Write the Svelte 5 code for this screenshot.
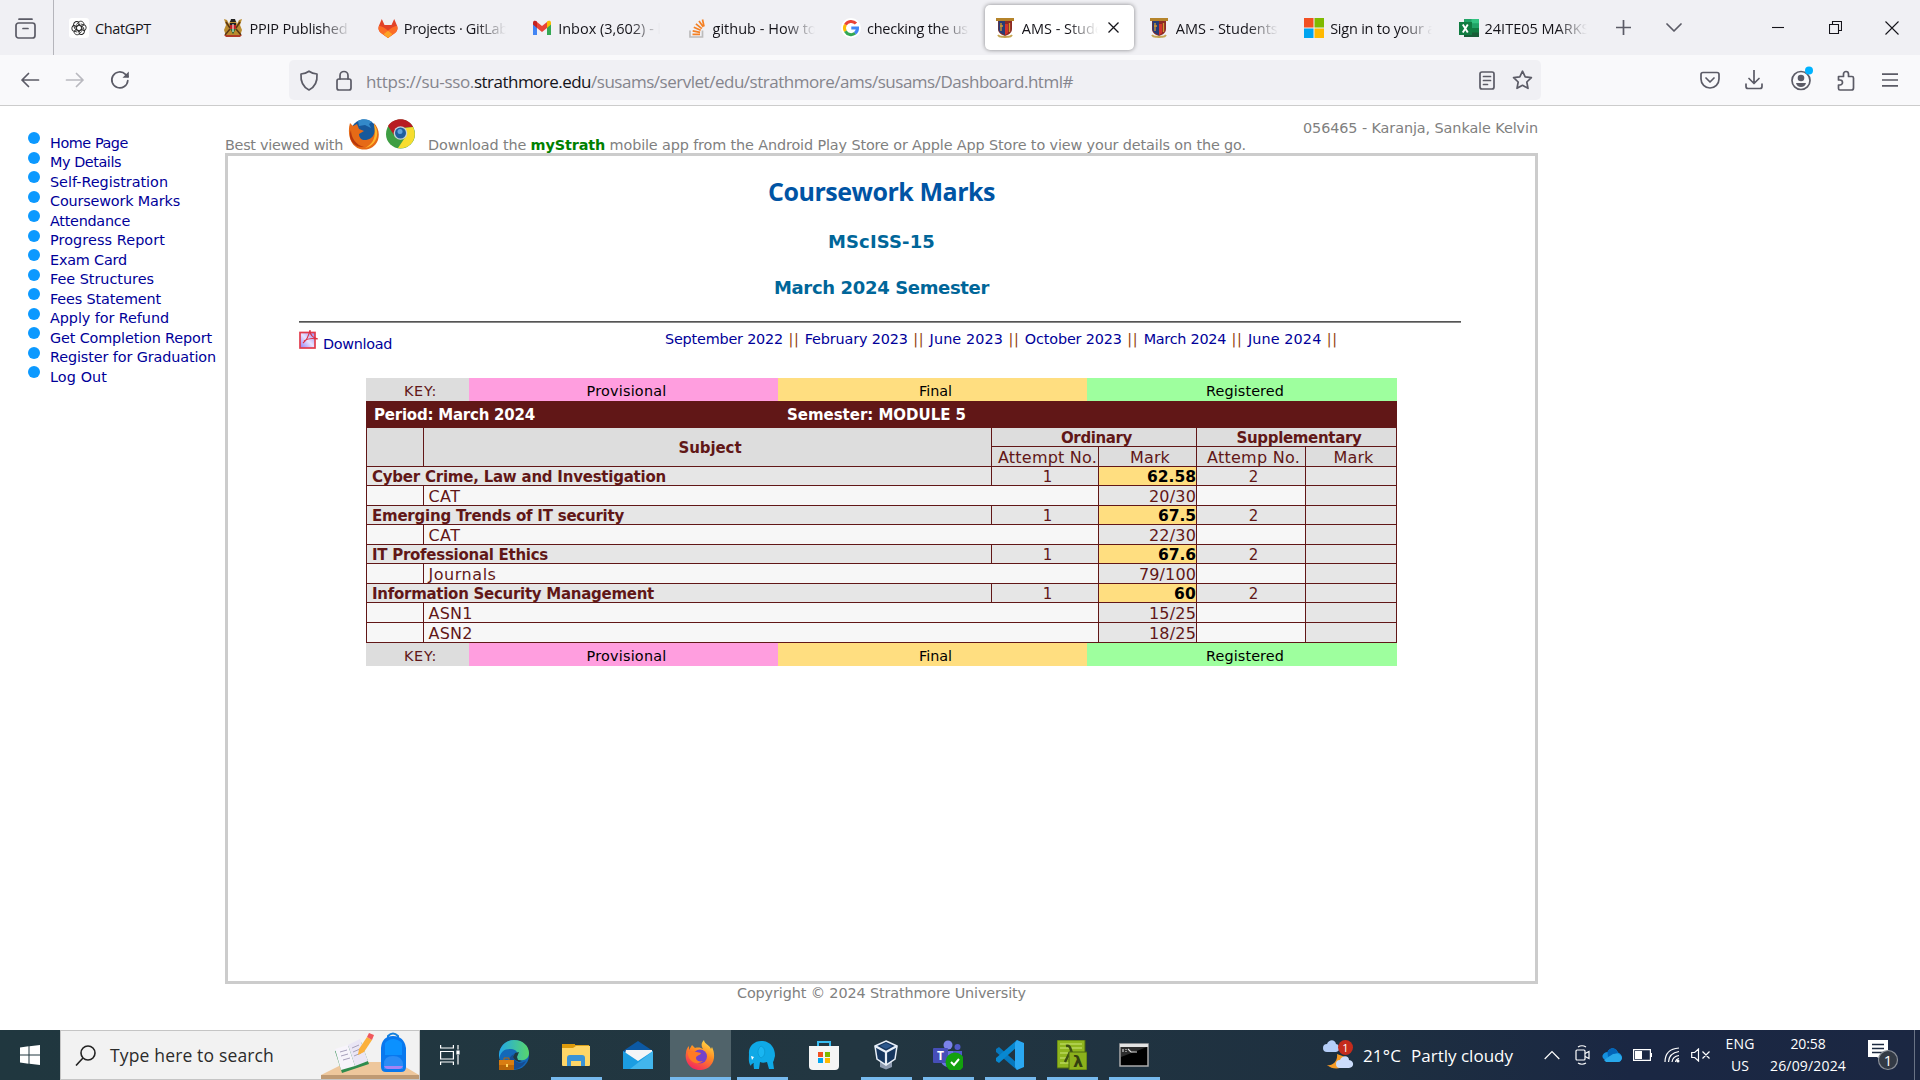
<script>
  const tabs = [
    { icon: 'gpt', title: 'ChatGPT', w: 56 },
    { icon: 'kenya', title: 'PPIP Published D', w: 112 },
    { icon: 'gitlab', title: 'Projects · GitLab', w: 104 },
    { icon: 'gmail', title: 'Inbox (3,602) - k', w: 107 },
    { icon: 'stack', title: 'github - How to', w: 104 },
    { icon: 'google', title: 'checking the use', w: 109 },
    { icon: 'ams', title: 'AMS - Stude', w: 81, active: true },
    { icon: 'ams', title: 'AMS - Students', w: 102 },
    { icon: 'ms', title: 'Sign in to your a', w: 105 },
    { icon: 'excel', title: '24ITE05 MARKS', w: 105 }
  ];
  const menu = [
    ['Home Page', 78], ['My Details', 71], ['Self-Registration', 118], ['Coursework Marks', 130],
    ['Attendance', 80], ['Progress Report', 115], ['Exam Card', 77], ['Fee Structures', 104],
    ['Fees Statement', 111], ['Apply for Refund', 119], ['Get Completion Report', 162],
    ['Register for Graduation', 166], ['Log Out', 57]
  ];
  const semesters = [
    ['September 2022', 118], ['February 2023', 103], ['June 2023', 73.5],
    ['October 2023', 97], ['March 2024', 82.5], ['June 2024', 73.5]
  ];
  const subjects = [
    { name: 'Cyber Crime, Law and Investigation', w: 294, mark: '62.58', mw: 49, parts: [['CAT', '20/30', 32, 47]] },
    { name: 'Emerging Trends of IT security', w: 252, mark: '67.5', mw: 38, parts: [['CAT', '22/30', 32, 47]] },
    { name: 'IT Professional Ethics', w: 176, mark: '67.6', mw: 38, parts: [['Journals', '79/100', 68, 57]] },
    { name: 'Information Security Management', w: 282, mark: '60', mw: 22, parts: [['ASN1', '15/25', 44, 47], ['ASN2', '18/25', 44, 47]] }
  ];
  const apps = [
    { icon: 'edge' }, { icon: 'folder', open: true }, { icon: 'mail' },
    { icon: 'firefox', open: true, current: true }, { icon: 'elephant', open: true }, { icon: 'store' },
    { icon: 'vbox', open: true }, { icon: 'teams', open: true }, { icon: 'code', open: true },
    { icon: 'lambda', open: true }, { icon: 'cmd', open: true }
  ];

  // Tracks the text so that a line takes exactly the given width.
  function fit(node, width) {
    node.style.letterSpacing = '0px';
    const natural = node.getBoundingClientRect().width;
    const count = node.textContent.trim().length;
    node.style.letterSpacing = (width - natural) / count + 'px';
  }
</script>

{#snippet art(name)}
  {#if name === 'gpt'}
    <svg viewBox="0 0 20 20"><rect width="20" height="20" rx="3" fill="#fff" /><g fill="none" stroke="#222" stroke-width=".9">{#each [0, 60, 120, 180, 240, 300] as a}<path transform="rotate({a} 10 10)" d="M10 7.300 13 9V12.600M7.300 6.500 10.400 3.500c2.200-1 4.900.8 4.600 3.400L12 8.800" />{/each}</g></svg>
  {:else if name === 'kenya'}
    <svg viewBox="0 0 20 20"><path d="M1 1l3 1 2 4 1-3h6l1 3 2-4 3-1-2 6 2 5-2 6H3l-2-6 2-5z" fill="#b98b2e" /><path d="M3 4l4 6M17 4l-4 6M2 17l5-6M18 17l-5-6" stroke="#5a3414" stroke-width="1.500" /><path d="M8 1h4l1 3H7z" fill="#222" /><path d="M7 5h6v5l-3 6-3-6z" fill="#bd1f24" /><path d="M7 5h6v2H7z" fill="#222" /><path d="M7.500 11h5L10 16z" fill="#187c3b" /><path d="M10 6v8" stroke="#fff" /><path d="M1 17h18l-2 2H3z" fill="#b03a27" /></svg>
  {:else if name === 'gitlab'}
    <svg viewBox="0 0 20 20"><path d="M3.800 1 1 7.500C-.2 10.500.5 13 3 15l7 5 7-5c2.500-2 3.200-4.500 2-7.500L16.200 1l-2.700 6h-7z" fill="#e24329" /><path d="M1 7.800c3.500.5 6.200 2.500 9 5 2.800-2.500 5.500-4.500 9-5 1 3 .2 5.400-2 7.200L10 20l-7-5C.8 13.200 0 10.800 1 7.800z" fill="#fc6d26" /><path d="M5.500 16.200 10 12.800l4.500 3.400L10 20z" fill="#fca326" /></svg>
  {:else if name === 'gmail'}
    <svg viewBox="0 0 20 20"><path d="M1 5v12h4V8.500z" fill="#4285f4" /><path d="M15 8.500V17h4V5z" fill="#34a853" /><path d="M5 4v6l5 4 5-4V4l-5 4z" fill="#ea4335" /><path d="M1 6.500v-2C1 2.500 3.500 2 5 3.500V10z" fill="#c5221f" /><path d="M19 6.500v-2c0-2-2.500-2.500-4-1V10z" fill="#fbbc04" /></svg>
  {:else if name === 'stack'}
    <svg viewBox="0 0 20 20"><path d="M3 12.500v6.500h12.500v-6.500" fill="none" stroke="#bcbbbb" stroke-width="1.700" /><g stroke="#f48024" stroke-width="1.700"><path d="M5.500 16.300h7.500M5.700 12.800l7.400 1.500M6.800 9.200l6.900 3.100M8.900 5.800l5.900 4.800M12 3l4.300 6M15.500 1.500l1.500 7" /></g></svg>
  {:else if name === 'google'}
    <svg viewBox="0 0 20 20"><circle cx="10" cy="10" r="10" fill="#fff" /><g fill="none" stroke-width="3"><path d="M15 5.600A6.500 6.500 0 0 0 4.400 6.800" stroke="#ea4335" /><path d="M4.400 6.700a6.500 6.500 0 0 0 0 6.600" stroke="#fbbc05" /><path d="M4.400 13.200a6.500 6.500 0 0 0 9.800 2" stroke="#34a853" /><path d="M14 15.300A6.500 6.500 0 0 0 16.500 10H10.300" stroke="#4285f4" /></g></svg>
  {:else if name === 'ams'}
    <svg viewBox="0 0 20 20"><path d="M0 0h18v3H0z" fill="#b5842b" /><path d="M2 3h14v8c0 4-4 6-7 7-3-1-7-3-7-7z" fill="#8c2a25" /><path d="M2.500 3H9v14C5 15.500 2.500 14 2.500 11z" fill="#263c78" /><path d="M9 6h3v9l-3 2z" fill="#d4342c" /><path d="M5 5v8M4 8h3M13.500 5v9" stroke="#d49b30" stroke-width="1.300" /><path d="M2 17c2 3 4 1 7 2 3-1 5 1 7-2" fill="none" stroke="#c6a653" stroke-width="2" /></svg>
  {:else if name === 'ms'}
    <svg viewBox="0 0 20 20"><path d="M0 0h9.500v9.500H0z" fill="#f25022" /><path d="M10.500 0H20v9.500h-9.500z" fill="#7fba00" /><path d="M0 10.500h9.500V20H0z" fill="#00a4ef" /><path d="M10.500 10.500H20V20h-9.500z" fill="#ffb900" /></svg>
  {:else if name === 'excel'}
    <svg viewBox="0 0 20 20"><path d="M5 1h15v18H5z" fill="#21a366" /><path d="M12.500 1H20v4.500h-7.500z" fill="#33c481" /><path d="M12.500 5.500H20V10h-7.500z" fill="#21a366" /><path d="M5 5.500h7.500V10H5z" fill="#107c41" /><path d="M5 10h15v9H5z" fill="#185c37" /><path d="M12.500 10H20v4.500h-7.500z" fill="#107c41" /><rect y="4" width="13" height="13" fill="#107c41" /><path d="M3.800 6.500l5 8M8.800 6.500l-5 8" stroke="#fff" stroke-width="1.900" /></svg>
  {:else if name === 'edge'}
    <svg viewBox="0 0 30 30"><defs><linearGradient id="eg" x1="0" x2="1"><stop offset="0" stop-color="#22a7e8" /><stop offset="1" stop-color="#58d66b" /></linearGradient></defs><circle cx="15" cy="15" r="15" fill="#1368b8" /><path d="M0 14C1 5 8 0 15 0c9 0 15 6 15 13 0 5-4 8-9 7-4 0-4-2-3-4 2-4-2-7-7-7C5 9 1 12 0 20z" fill="url(#eg)" /><path d="M15 14c-2 5 2 9 7 9l5-2c-3 6-9 9-15 8-4-5-3-12 3-15z" fill="#174c91" /><path d="M16 13l4-1-2 5 1 3 4 1-3 1-4-2-2-3z" fill="#203840" /><rect x="0" y="20" width="15" height="10" fill="#b96508" /><path d="M0 20h15v5H0z" fill="#d97d12" /><path d="M5 20v-2h5v2" fill="none" stroke="#b96508" /><path d="M7 24h2v3H7z" fill="#ffd35c" /></svg>
  {:else if name === 'folder'}
    <svg viewBox="0 0 30 30"><path d="M1 4h13v5H1z" fill="#dd9a0b" /><path d="M14 5h14v3H14z" fill="#dba21c" /><path d="M1 8h11l3-2h14v19q0 1-1 1H2q-1 0-1-1z" fill="#ffd667" /><path d="M6 26v-8q0-3 3-3h12q3 0 3 3v8h-4v-5H10v5z" fill="#3b93d6" /></svg>
  {:else if name === 'mail'}
    <svg viewBox="0 0 30 30"><path d="M0 11 15 1l15 10v18H0z" fill="#0c59a4" /><path d="M3 10h26v6l-13 7L2 14z" fill="#f3f5f7" /><path d="M0 11l15 10 15-10v18H0z" fill="#1b9de2" /><path d="M30 11v18H7z" fill="#52c1f2" opacity=".7" /></svg>
  {:else if name === 'firefox'}
    <svg viewBox="0 0 30 30"><defs><linearGradient id="ff" x1=".8" y1="0" x2=".3" y2="1"><stop offset="0" stop-color="#ffe14a" /><stop offset=".45" stop-color="#ff8a22" /><stop offset="1" stop-color="#f32560" /></linearGradient></defs><path d="M19 0c0 4 6 5 7 9l1-2c5 10 1 22-11 23C6 31-1 22 1 13c0-3 1-5 3-7v4l3-5 3 3c4-1 6 0 8 1-2-3-2-6 1-9z" fill="url(#ff)" /><circle cx="15" cy="16.500" r="7" fill="#7542c9" /><path d="M3 12c4-2 9 0 13 1-1 3-5 2-5 5s4 4 7 3c-7 6-16-1-15-9z" fill="#ff7a24" /></svg>
  {:else if name === 'elephant'}
    <svg viewBox="0 0 30 30"><path d="M2 14C1 6 8 0 16 1c8 1 12 7 12 15-1 3-1 5-2 6l1 7h-5l-2-7c-3 1-5 1-7 0l-1 7H7c0-2-1-4 0-6-2 1-3 1-3 3-3-3-2-8-2-12z" fill="#0fa9e6" /><path d="M14 6c5 2 5 10 0 12-4-3-4-9 0-12z" fill="#19b6f2" stroke="#0a95cc" stroke-width=".7" /><path d="M4 16l3 1-2 3z" fill="#fff" /></svg>
  {:else if name === 'store'}
    <svg viewBox="0 0 30 30"><path d="M9 6V2h12v4" fill="none" stroke="#38bdf2" stroke-width="2" /><path d="M0 6h30v20q0 4-4 4H4q-4 0-4-4z" fill="#f5f5f5" /><path d="M9 12h5v5H9z" fill="#f25022" /><path d="M16 12h5v5h-5z" fill="#7fba00" /><path d="M9 18h5v5H9z" fill="#00a4ef" /><path d="M16 18h5v5h-5z" fill="#ffb900" /></svg>
  {:else if name === 'vbox'}
    <svg viewBox="0 0 30 30"><path d="M9 22l6-1 6 1v5l-6 2.500-6-2.500z" fill="#8d9bb0" /><path d="M15 1 26 6 24 19 15 25 6 19 4 6z" fill="#16365e" stroke="#e8eff8" stroke-width="1.500" /><path d="M4 6l11 6 11-6M15 12v13" fill="none" stroke="#e8eff8" stroke-width="2.200" /><path d="M9 6l6-3 6 3-6 3z" fill="#2c578c" /></svg>
  {:else if name === 'teams'}
    <svg viewBox="0 0 30 30"><circle cx="15" cy="5" r="4.500" fill="#7b83eb" /><circle cx="24.500" cy="7" r="3" fill="#5059c9" /><path d="M8 11h13v13c-4 5-12 3-13-3z" fill="#6b73e0" /><path d="M20 11h9v10h-9z" fill="#5059c9" /><rect x="0" y="8" width="15" height="15" rx="1" fill="#464eb8" /><text x="7.500" y="20" class="t-logo">T</text><circle cx="22" cy="22" r="9.500" fill="#13a10e" /><path d="M18 22l3 3 5-6" fill="none" stroke="#fff" stroke-width="2" /></svg>
  {:else if name === 'code'}
    <svg viewBox="0 0 30 30"><path d="M1 9l3-2 19 17-1 6L1 12z" fill="#0678be" /><path d="M1 21l3 2L23 6 22 0 1 18z" fill="#0788d1" /><path d="M22 0l7 3v24l-7 3-2-3V3z" fill="#2aa8f2" /></svg>
  {:else if name === 'lambda'}
    <svg viewBox="0 0 30 30"><path d="M0 0h28v28H0z" fill="#8fb51e" stroke="#4c6811" /><path d="M3 4h22M3 8h22M3 13h9M3 18h9M3 23h9" stroke="#b9d65b" stroke-width="1.500" /><path d="M9 6c5-1 4 3 6 7M13 12l-5 10" stroke="#3d4e14" stroke-width="2.500" fill="none" /><path d="M12 12h18v18H12z" fill="#8cb11c" stroke="#4c6811" /><text x="21" y="27" class="l-logo">λ</text></svg>
  {:else if name === 'cmd'}
    <svg viewBox="0 0 30 30"><path d="M1 4h28v22H1z" fill="#000" stroke="#aaa" stroke-width="1.500" /><path d="M1 4h28v3H1z" fill="#e3e3e3" /><path d="M2 7h26L2 17z" fill="#2c2c2c" /><path d="M4 9v3M7 9v1M7 11v1M9 9l3 3M12 12h6" stroke="#ddd" stroke-width="1.100" /></svg>
  {/if}
{/snippet}

{#snippet keyRow()}
  <div class="key">
    <div class="k0"><span use:fit={33}>KEY:</span></div>
    <div class="k1"><span use:fit={80}>Provisional</span></div>
    <div class="k2"><span use:fit={33}>Final</span></div>
    <div class="k3"><span use:fit={78}>Registered</span></div>
  </div>
{/snippet}

<div class="screen">
  <div class="tabbar">
    <div class="view"><svg width="21" height="21" viewBox="0 0 21 21" class="line"><path d="M4 1.200h13" /><rect x="1" y="5" width="19" height="15" rx="2.500" /><path d="M8 10.500h5" /></svg></div>
    {#each tabs as t}
      <div class="tab" class:active={t.active}>
        <div class="fav">{@render art(t.icon)}</div>
        <div class="label" class:faded={t.title !== 'ChatGPT'}><span use:fit={t.w}>{t.title}</span></div>
        {#if t.active}<svg class="x" width="11" height="11" viewBox="0 0 11 11"><path d="M.5.500l10 10M10.500.500l-10 10" stroke="#15141a" stroke-width="1.300" /></svg>{/if}
      </div>
    {/each}
    <div class="controls">
      <svg width="15" height="15" viewBox="0 0 15 15" class="line"><path d="M7.500 0v15M0 7.500h15" /></svg>
      <svg width="16" height="9" viewBox="0 0 16 9" class="line"><path d="M1 1l7 7 7-7" /></svg>
      <svg width="12" height="12" viewBox="0 0 12 12" class="win"><path d="M0 5.500h12" /></svg>
      <svg width="13" height="13" viewBox="0 0 13 13" class="win"><path d="M.5 3.500h9v9h-9zM3.500 3V.500h9v9H10" /></svg>
      <svg width="14" height="14" viewBox="0 0 14 14" class="win"><path d="M.5.500l13 13M13.500.500l-13 13" /></svg>
    </div>
  </div>

  <div class="toolbar">
    <div class="nav">
      <svg width="20" height="20" viewBox="0 0 20 20" class="line"><path d="M18.500 10H2M8.500 3.500 2 10l6.500 6.500" /></svg>
      <svg width="20" height="20" viewBox="0 0 20 20" class="line dim"><path d="M1.500 10H18M11.500 3.500 18 10l-6.500 6.500" /></svg>
      <svg width="20" height="20" viewBox="0 0 20 20" class="line"><path d="M17.800 10.500A8 8 0 1 1 15.500 4.300L18 6.500" /><path d="M18.800 1.500v6.300h-6.300z" fill="#5b5b66" stroke="none" /></svg>
    </div>
    <div class="url">
      <svg width="20" height="21" viewBox="0 0 20 21" class="line"><path d="M10 1.200c2.500 1.800 5 2.500 8 2.800.5 7-2 13-8 16C4 17 1.500 11 2 4c3-.3 5.500-1 8-2.800z" /></svg>
      <svg width="16" height="21" viewBox="0 0 16 21" class="line"><rect x="1" y="9" width="14" height="11" rx="2" /><path d="M4 9V5.500a4 4 0 0 1 8 0V9" /></svg>
      <div class="address"><span use:fit={108}>https://su-sso.</span><b use:fit={117}>strathmore.edu</b><span use:fit={482}>/susams/servlet/edu/strathmore/ams/susams/Dashboard.html#</span></div>
      <svg width="16" height="19" viewBox="0 0 16 19" class="line"><rect x="1" y="1" width="14" height="17" rx="2" /><path d="M4.500 5.500h7M4.500 9.500h7M4.500 13.500h4" /></svg>
      <svg width="21" height="20" viewBox="0 0 21 20" class="line"><path d="M10.500 1.200l2.700 5.700 6.200.8-4.600 4.300 1.200 6.300-5.500-3-5.500 3 1.200-6.300L1.600 7.700l6.200-.8z" /></svg>
    </div>
    <div class="tools">
      <svg width="20" height="20" viewBox="0 0 20 20" class="line"><path d="M3 2.500h14q2 0 2 2V9a9 9 0 0 1-18 0V4.500q0-2 2-2zM6 8l4 4 4-4" /></svg>
      <svg width="20" height="20" viewBox="0 0 20 20" class="line"><path d="M10 0v13M5 8.500l5 5 5-5M2 14v2.500q0 2 2 2h12q2 0 2-2V14" /></svg>
      <svg width="22" height="30" viewBox="0 0 22 30" class="line"><circle cx="10" cy="15.500" r="9" /><circle cx="10" cy="13" r="3.300" fill="#5b5b66" stroke="none" /><path d="M5 18h10q-1 4-5 4t-5-4z" fill="#5b5b66" stroke="none" /><circle cx="18" cy="5.500" r="4" fill="#00b3ff" stroke="none" /></svg>
      <svg width="20" height="21" viewBox="0 0 20 21" class="line"><path d="M2.500 6.500h5V4a2.500 2.500 0 0 1 5 0v2.500H16q1.500 0 1.500 1.500v10q0 2-2 2H4q-1.500 0-1.500-1.500V15H4a2 2 0 0 0 0-5H2.500z" /></svg>
      <svg width="16" height="14" viewBox="0 0 16 14" class="line"><path d="M0 1.200h16M0 7h16M0 12.800h16" /></svg>
    </div>
  </div>

  <div class="page">
    <ul class="menu">
      {#each menu as m}<li><i></i><a href="#top" use:fit={m[1]}>{m[0]}</a></li>{/each}
    </ul>
    <div class="main">
      <div class="top">
        <span use:fit={118}>Best viewed with</span>
        <svg class="oldfox" width="32" height="32" viewBox="0 0 32 32"><circle cx="16" cy="15" r="13.500" fill="#17599c" /><path d="M10 3c4-3 11-2 14 1l-3 2 2 4-6-3-6 1z" fill="#3389c9" /><path d="M2 5l3 3 4-2 2 5 5 2-5 3c0 6 6 8 12 4 5-4 4-10 3-15 4 4 6 10 4 17-3 8-11 11-18 9C2 28-1 15 2 5z" fill="#e66a17" /><path d="M26 6c7 9 2 22-9 24 10-5 11-13 9-24z" fill="#ffb62c" /><path d="M3 12c0 8 5 15 13 17C6 30-1 21 3 12z" fill="#b8370d" /></svg>
        <svg class="chrome" width="31" height="30" viewBox="0 0 31 30"><circle cx="15.500" cy="15" r="14.500" fill="#3e9e43" /><path d="M3 7C9-2 23-2 28 8l-13 1-6 7z" fill="#b81c22" /><path d="M28 8c6 12-4 23-15 21l8-12-2-8z" fill="#f7dd2f" /><circle cx="15.500" cy="14" r="6.800" fill="#c9d3d8" /><circle cx="15.500" cy="14" r="5.500" fill="#1f5f9f" /><circle cx="15" cy="12.500" r="2.500" fill="#5fa4dc" /></svg>
        <span use:fit={818}>Download the <b>myStrath</b> mobile app from the Android Play Store or Apple App Store to view your details on the go.</span>
        <span class="user" use:fit={235}>056465 - Karanja, Sankale Kelvin</span>
      </div>
      <div class="box">
        <h1><span use:fit={227}>Coursework Marks</span></h1>
        <h2 class="course"><span use:fit={107}>MScISS-15</span></h2>
        <h2 class="sem"><span use:fit={215}>March 2024 Semester</span></h2>
        <div class="rule"></div>
        <div class="links">
          <svg width="19" height="19" viewBox="0 0 19 19"><defs><linearGradient id="pg" x1="0" y1="1" x2="1" y2="0"><stop offset="0" stop-color="#8f7cf5" /><stop offset=".5" stop-color="#e9e3ff" /><stop offset="1" stop-color="#9486f0" /></linearGradient></defs><rect x="1" y="2.500" width="15" height="15.500" fill="url(#pg)" stroke="#e23b4c" stroke-width="1.700" /><path d="M4 13c4-3 6-8 7-13 0 5 3 8 8 9M5 11c4-3 8-3 13-2" fill="none" stroke="#dc3043" stroke-width="1.100" /></svg>
          <a class="download" href="#top" use:fit={69}>Download</a>
          <div class="sems">{#each semesters as s}<a href="#top" use:fit={s[1]}>{s[0]}</a><span use:fit={11}>||</span>{/each}</div>
        </div>
        <div class="report">
          {@render keyRow()}
          <div class="band"><span use:fit={161}>Period: March 2024</span><span use:fit={179}>Semester: MODULE 5</span></div>
          <div class="grid">
            <div class="h tall"></div>
            <div class="h tall bold"><span use:fit={63}>Subject</span></div>
            <div class="h two bold"><span use:fit={71}>Ordinary</span></div>
            <div class="h two bold"><span use:fit={125}>Supplementary</span></div>
            <div class="h"><span use:fit={99}>Attempt No.</span></div>
            <div class="h"><span use:fit={40}>Mark</span></div>
            <div class="h"><span use:fit={93}>Attemp No.</span></div>
            <div class="h"><span use:fit={40}>Mark</span></div>
            {#each subjects as s}
              <div class="g name"><span use:fit={s.w}>{s.name}</span></div>
              <div class="g">1</div>
              <div class="final"><span use:fit={s.mw}>{s.mark}</span></div>
              <div class="g">2</div>
              <div class="g"></div>
              {#each s.parts as p}
                <div class="w"></div>
                <div class="w part"><span use:fit={p[2]}>{p[0]}</span></div>
                <div class="g score"><span use:fit={p[3]}>{p[1]}</span></div>
                <div class="w"></div>
                <div class="g"></div>
              {/each}
            {/each}
          </div>
          {@render keyRow()}
        </div>
      </div>
      <div class="copy"><span use:fit={289}>Copyright © 2024 Strathmore University</span></div>
    </div>
  </div>

  <div class="taskbar">
    <div class="start"><svg width="20" height="20" viewBox="0 0 20 20" fill="#fff"><path d="M0 2.500 8.500 1.300v8.200H0zM9.500 1.200 20 0v9.500H9.500zM0 10.500h8.500v8.200L0 17.500zM9.500 10.500H20V20L9.500 18.800z" /></svg></div>
    <div class="search">
      <svg width="21" height="21" viewBox="0 0 21 21" fill="none" stroke="#222" stroke-width="1.600"><circle cx="13" cy="8" r="7" /><path d="M8 13 1 20.500" /></svg>
      <span use:fit={164}>Type here to search</span>
      <svg class="scene" width="98" height="48" viewBox="0 0 98 48"><path d="M26 31h50l22 13H0z" fill="#eec79c" /><path d="M0 44h98v4H0z" fill="#bf9a73" /><path d="M14 20 40 11l8 22-27 9z" fill="#2e8c4d" /><path d="M14 18l13-4 7 21-14 4z" fill="#f7f4fb" /><path d="M27 14l12-6 8 22-13 5z" fill="#eae6f5" /><path d="M19 21l7-2M20 25l7-2M22 29l7-2M31 17l7-3M32 21l7-3M33 25l7-3" stroke="#a7a1bb" /><path d="M38 18l8-12 5 3-8 12-6 3z" fill="#fbb03b" /><path d="M46 6l2-4 5 2-2 5z" fill="#f0575c" /><path d="M67 8V5q5-5 10 0v3" fill="none" stroke="#1680dc" stroke-width="2" /><path d="M60 36V17q1-12 12-12t13 12v19q0 5-5 5H65q-5 0-5-5z" fill="#0878ee" /><path d="M64 12q8-8 17 0v12H64z" fill="#0b91ff" /><path d="M63 33q0-8 9-8t10 8v5H63z" fill="#2b8cf5" /><path d="M63 35h19q-1 3-4 3H67q-3 0-4-3z" fill="#a683f3" /></svg>
    </div>
    <div class="view2"><svg width="20" height="20" viewBox="0 0 20 20" fill="none" stroke="#fff" stroke-width="1.200"><path d="M.6 0v3h12.800V0M.6 6.500h12.800v7.500H.6zM.6 20v-3h12.800v3M18 0v4.500M18 10v9.500" /><path d="M17 6h2v3h-2z" fill="#fff" /></svg></div>
    <div class="apps">
      {#each apps as a}<div class="app" class:open={a.open} class:current={a.current}>{@render art(a.icon)}</div>{/each}
    </div>
    <div class="tray">
      <svg class="weather" width="31" height="30" viewBox="0 0 31 30"><path d="M14 14c1 7-4 12-10 11 8 7 21 3 21-7z" fill="#f79b25" /><path d="M4 12a4 4 0 0 1 0-8c2-5 8-5 9 0 5 1 4 8 0 8z" fill="#b5cef8" /><path d="M17 28a4 4 0 0 1 0-8c2-5 9-5 9 0 6 1 5 8 0 8z" fill="#cbdcfb" /><circle cx="22.500" cy="7.500" r="7.500" fill="#c42b1c" /><text x="22.500" y="12" class="alert">1</text></svg>
      <span class="temp" use:fit={38}>21°C</span>
      <span class="cond" use:fit={102}>Partly cloudy</span>
      <svg class="up" width="16" height="10" viewBox="0 0 16 10"><path d="M.7 9 8 1.500 15.300 9" /></svg>
      <svg class="cam" width="15" height="20" viewBox="0 0 15 20"><rect x="1" y="5" width="9" height="10" rx="1" /><path d="M10 8.500l4-2v7l-4-2M3 2q4-2.500 8 0M3 18q4 2.500 8 0" /></svg>
      <svg class="drive" width="20" height="14" viewBox="0 0 20 14"><path d="M4 12Q0 11 .5 7.500 2 4 5.500 4 8-.5 12 .5q3 1 4 4Q20 6 20 10q-1 4-4 4H4z" fill="#1490df" /><path d="M5.500 4Q8-.5 12 .5q3 1 4 4L6 9z" fill="#0364b8" /><path d="M2 12l9-6q8-1 9 4-1 4-4 4H4z" fill="#28a8ea" /></svg>
      <svg class="battery" width="19" height="12" viewBox="0 0 19 12"><path d="M.6.600h16.800v10.800H.6zM18.500 4v4" /><rect class="charge" x="2" y="2" width="7" height="8" /></svg>
      <svg class="wifi" width="16" height="16" viewBox="0 0 16 16"><path d="M1 15Q1 2 15 1M4.500 15Q5 6 15 4.500M8 15Q8.500 9.500 15 8.500M11.500 15q.5-3 3.500-3.500" /><circle cx="14" cy="14" r="1.500" fill="#fff" stroke="none" /></svg>
      <svg class="sound" width="20" height="14" viewBox="0 0 20 14"><path d="M.7 4.500h3L7.500 1v12L3.700 9.500h-3zM11.500 3.500l7 7M18.500 3.500l-7 7" /></svg>
      <div class="lang"><span use:fit={29}>ENG</span><span use:fit={18}>US</span></div>
      <div class="clock"><span use:fit={35}>20:58</span><span use:fit={76}>26/09/2024</span></div>
      <svg class="note" width="32" height="31" viewBox="0 0 32 31"><path d="M1 0h20v17h-6v4l-5-4H1z" fill="#fff" stroke="none" /><path d="M5 4.500h12M5 8.500h12M5 12.500h12" stroke="#1c2a40" stroke-width="1.300" /><circle cx="21" cy="20" r="9.500" fill="#333a45" stroke="#8a8f98" /><text x="21" y="25.500" class="count">1</text></svg>
      <div class="peek"></div>
    </div>
  </div>
</div>

<style>
  :global(body) { margin: 0; overflow: hidden; background: #fff; }
  .screen { width: 1920px; height: 1080px; display: flex; flex-direction: column; overflow: hidden; font-family: "DejaVu Sans", Verdana, sans-serif; }
  svg { display: block; flex: none; }
  span, a, b { white-space: nowrap; }
  a { color: #009; text-decoration: none; }
  .line { fill: none; stroke: #5b5b66; stroke-width: 1.7; stroke-linecap: round; stroke-linejoin: round; }
  .dim { opacity: .4; }
  .win { fill: none; stroke: #15141a; stroke-width: 1.1; }

  .tabbar { flex: 0 0 55px; display: flex; align-items: center; background: #f0f0f4; font: 14.500px/20px "Open Sans", sans-serif; color: #15141a; }
  .view { flex: none; width: 54px; height: 55px; border-right: 1px solid #b5b5bb; display: flex; align-items: center; padding: 2px 0 0 15px; box-sizing: border-box; }
  .tab { flex: 0 0 154.400px; box-sizing: border-box; display: flex; align-items: center; gap: 6px; height: 45px; padding-left: 15px; }
  .tab.active { flex-basis: 149px; margin: 0 .900px 0 4.500px; padding-left: 11px; background: #fff; border-radius: 5px; box-shadow: 0 0 4px rgba(0, 0, 0, .45); }
  .fav, .fav svg { width: 20px; height: 20px; }
  .fav { flex: none; }
  .label { width: 102px; overflow: hidden; padding-top: 3px; }
  .label span { display: inline-block; }
  .active .label { width: 76px; }
  .faded { mask-image: linear-gradient(90deg, #000 calc(100% - 30px), transparent); }
  .x { margin-left: 4px; }
  .controls { display: flex; align-items: center; padding-left: 18px; }
  .controls svg:nth-child(2) { margin-left: 35px; }
  .controls svg:nth-child(3) { margin-left: 90px; }
  .controls svg:nth-child(4) { margin-left: 45px; }
  .controls svg:nth-child(5) { margin-left: 43px; }

  .toolbar { flex: 0 0 50px; display: flex; align-items: center; background: #f9f9fb; border-bottom: 1px solid #ccc; }
  .nav { width: 289px; box-sizing: border-box; padding-left: 20px; display: flex; gap: 25px; }
  .url { width: 1252px; height: 40px; box-sizing: border-box; padding: 0 8.500px 0 10px; display: flex; align-items: center; background: #f0f0f4; border-radius: 5px; }
  .url > svg:nth-child(2) { margin-left: 17px; }
  .address { flex: 1; padding: 3px 0 0 14px; display: flex; font: 17px/24px "Open Sans", sans-serif; color: #85858d; }
  .address b { font-weight: 400; color: #15141a; }
  .url > svg:nth-last-child(1) { margin-left: 17px; }
  .tools { flex: 1; display: flex; align-items: center; padding-left: 159px; }
  .tools svg:nth-child(2) { margin-left: 24px; }
  .tools svg:nth-child(3) { margin-left: 27px; }
  .tools svg:nth-child(4) { margin-left: 23px; }
  .tools svg:nth-child(5) { margin-left: 26px; }

  .page { flex: 1; display: flex; font-size: 14.400px; }
  .menu { flex: 0 0 225px; box-sizing: border-box; margin: 0; padding: 27px 0 0 28px; list-style: none; }
  .menu li { height: 19.500px; display: flex; align-items: center; gap: 10px; }
  .menu i { width: 12px; height: 12px; margin-top: -9px; border-radius: 50%; background: #0c99ff; }
  .main { width: 1313px; display: flex; flex-direction: column; }
  .top { height: 47px; display: flex; align-items: flex-end; line-height: 16px; color: gray; }
  .top b { color: green; }
  .oldfox { margin: 0 5px 3px 4.500px; }
  .chrome { margin: 0 12.500px 4px 0; }
  .user { align-self: flex-start; margin: 14px 0 0 auto; }
  .box { height: 831px; box-sizing: border-box; border: 3px solid #ccc; padding-top: 20px; }
  h1, h2 { margin: 0; text-align: center; }
  h1 { font: 700 25px/30px "Open Sans", sans-serif; color: #0054a4; }
  h2 { font-size: 18px; line-height: 24px; color: #069; }
  .course { margin-top: 24px; }
  .sem { margin-top: 22px; }
  .rule { height: 1px; margin: 21px 74px 0 71px; background: #555; border-bottom: 1px solid #888; }
  .links { height: 55px; display: flex; padding: 7px 0 0 71px; box-sizing: border-box; line-height: 18px; color: #93430f; }
  .download { margin: 5px 0 0 5px; }
  .sems { margin-left: 273px; display: flex; gap: 5.400px; flex: none; align-self: flex-start; }

  .report { width: 1031px; margin-left: 138px; color: #611717; }
  .key { height: 23px; display: grid; grid-template-columns: 103px 309px 309px 310px; grid-template-rows: 23px; text-align: center; line-height: 26px; color: #000; }
  .key div { padding-left: 6px; }
  .k0 { background: #ddd; color: #611717; }
  .k1 { background: #ff9edf; }
  .k2 { background: #ffde80; }
  .k3 { background: #9eff9e; }
  .band { height: 27px; box-sizing: border-box; padding-left: 8px; display: flex; gap: 252px; background: #611717; color: #fff; font-weight: 700; font-size: 15px; line-height: 28px; }
  .grid { display: grid; grid-template-columns: 56px 567px 106px 97px 108px 90px; grid-template-rows: 18px 19px 18px 19px 18px 19px 18px 19px 18px 19px 19px; gap: 1px; padding: 0 1px 1px; background: #611717; font-size: 16px; line-height: 22px; text-align: center; }
  .h { background: #ddd; padding-left: 5px; }
  .g { background: #e6e6e6; font-size: 15px; line-height: 20px; padding-left: 5px; }
  .w { background: #f7f7f7; }
  .bold, .name { font-weight: 700; font-size: 15px; line-height: 20px; }
  .tall { grid-row: span 2; line-height: 40px; }
  .two { grid-column: span 2; }
  .name { grid-column: span 2; text-align: left; }
  .part { grid-column: span 2; text-align: left; padding-left: 4.500px; }
  .final { background: #ffde80; color: #000; font-weight: 700; font-size: 15.500px; line-height: 20px; text-align: right; }
  .score { font-size: 16px; line-height: 21px; text-align: right; }
  .copy { line-height: 18px; text-align: center; color: gray; }

  .taskbar { flex: 0 0 50px; display: flex; background: linear-gradient(90deg, #20373f 0, #223641 45%, #1e3040 70%, #1a2743 85%, #1b2742); color: #fff; font-family: "Open Sans", sans-serif; }
  .start { width: 60px; display: grid; place-items: center; }
  .search { width: 360px; box-sizing: border-box; border: 1px solid #c5c5c5; background: #f2f2f2; color: #2b2b2b; display: flex; align-items: center; padding-left: 14px; gap: 14px; font-size: 17.500px; }
  .scene { margin-left: auto; align-self: flex-end; }
  .view2 { width: 63px; display: flex; align-items: center; padding-left: 20px; box-sizing: border-box; }
  .apps { display: flex; }
  .app { width: 51px; height: 50px; margin: 0 5.500px; box-sizing: border-box; display: flex; align-items: center; justify-content: center; border-bottom: 3px solid transparent; padding-top: 3px; }
  .app svg { width: 30px; height: 30px; }
  .open { border-color: #76b9ed; }
  .current { width: 61px; margin: 0 .5px; background: #50636a; }
  .t-logo { font: 700 12px "Open Sans", sans-serif; fill: #fff; text-anchor: middle; }
  .l-logo { font: 700 16px "DejaVu Sans", sans-serif; fill: #333f10; text-anchor: middle; }
  .tray { margin-left: auto; display: flex; align-items: center; }
  .tray svg:not(.weather):not(.drive) { fill: none; stroke: #fff; stroke-width: 1.200; }
  .temp { font-size: 17px; margin-left: 9px; padding-top: 1px; }
  .cond { font-size: 17px; margin-left: 10px; padding-top: 1px; }
  .up { margin-left: 31px; }
  .cam { margin-left: 15px; }
  .drive { margin-left: 12px; }
  .battery { margin-left: 11px; }
  .tray .charge { fill: #fff; stroke: none; }
  .wifi { margin-left: 12px; }
  .sound { margin-left: 11px; }
  .lang, .clock { display: flex; flex-direction: column; align-items: center; font-size: 14px; line-height: 22px; }
  .lang { width: 30px; margin-left: 14px; }
  .clock { width: 78px; margin-left: 14px; }
  .tray .note { margin: 0 0 0 20px; }
  .alert { font: 11px "Open Sans", sans-serif; fill: #fff; text-anchor: middle; }
  .tray .count { font: 15px "Open Sans", sans-serif; fill: #fff; stroke: none; text-anchor: middle; }
  .peek { width: 5px; height: 50px; border-left: 1px solid #697385; margin-left: 15px; }
</style>
